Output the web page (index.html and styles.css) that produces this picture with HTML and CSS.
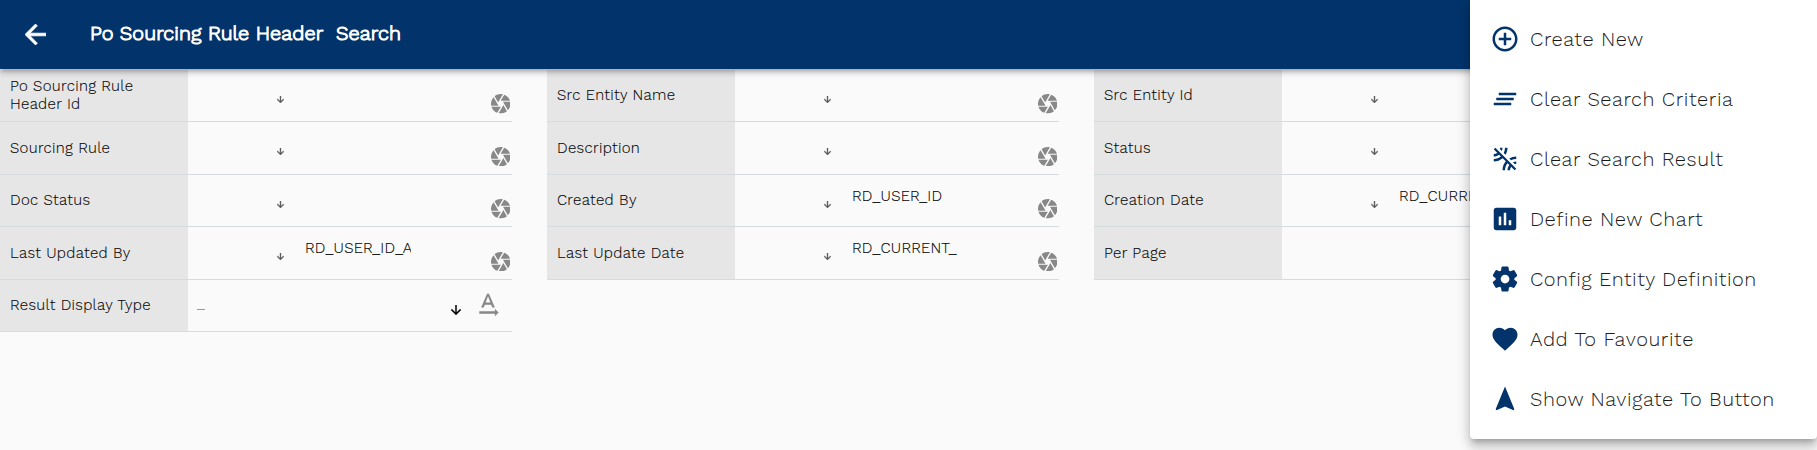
FILE: index.html
```html
<!DOCTYPE html>
<html lang="en">
<head>
<meta charset="utf-8">
<title>Po Sourcing Rule Header Search</title>
<link rel="stylesheet" href="styles.css">
</head>
<body>
<svg class="defs" aria-hidden="true">
  <symbol id="down" viewBox="4 4 16 16"><path d="M20 12l-1.41-1.41L13 16.17V4h-2v12.17l-5.58-5.59L4 12l8 8 8-8z"/></symbol>
  <symbol id="lens" viewBox="2 2 20 20"><path d="M9.4 10.5l4.77-8.26C13.47 2.09 12.75 2 12 2c-2.4 0-4.6.85-6.32 2.25l3.66 6.35.06-.1zM21.54 9c-.92-2.92-3.15-5.26-6-6.34L11.88 9h9.66zm.26 1h-7.49l.29.5 4.76 8.25C21 16.97 22 14.61 22 12c0-.69-.07-1.35-.2-2zM8.54 12l-3.9-6.75C3.01 7.03 2 9.39 2 12c0 .69.07 1.35.2 2h7.49l-1.15-2zm-6.08 3c.92 2.92 3.15 5.26 6 6.34L12.12 15H2.46zm11.27 0l-3.9 6.76c.7.15 1.42.24 2.17.24 2.4 0 4.6-.85 6.32-2.25l-3.66-6.35-.93 1.6z"/></symbol>
</svg>
<header class="bar">
  <svg class="back" viewBox="4 4 16 16"><path d="M20 11H7.83l5.59-5.59L12 4l-8 8 8 8 1.41-1.41L7.83 13H20v-2z"/></svg>
  <h1 class="title"><span>Po Sourcing Rule Header</span><span>Search</span></h1>
</header>
<main class="form">
  <section class="col">
    <div class="row"><div class="label wrap">Po Sourcing Rule Header Id</div><div class="field"><svg class="op"><use href="#down"/></svg><div class="value"></div><svg class="lens"><use href="#lens"/></svg></div></div>
    <div class="row"><div class="label">Sourcing Rule</div><div class="field"><svg class="op"><use href="#down"/></svg><div class="value"></div><svg class="lens"><use href="#lens"/></svg></div></div>
    <div class="row"><div class="label">Doc Status</div><div class="field"><svg class="op"><use href="#down"/></svg><div class="value"></div><svg class="lens"><use href="#lens"/></svg></div></div>
    <div class="row"><div class="label">Last Updated By</div><div class="field"><svg class="op"><use href="#down"/></svg><div class="value">RD_USER_ID_A</div><svg class="lens"><use href="#lens"/></svg></div></div>
    <div class="row"><div class="label">Result Display Type</div><div class="field select"><span class="dash"></span><svg class="pick"><use href="#down"/></svg><svg class="rotate" viewBox="0 0 24 24"><path d="M12.75 3h-1.5L6.5 14h2.1l.9-2.2h5l.9 2.2h2.1L12.75 3zm-2.62 7L12 4.98 13.87 10h-3.74zm10.37 8l-3-3v2H5v2h12.5v2l3-3z"/></svg></div></div>
  </section>
  <section class="col">
    <div class="row"><div class="label">Src Entity Name</div><div class="field"><svg class="op"><use href="#down"/></svg><div class="value"></div><svg class="lens"><use href="#lens"/></svg></div></div>
    <div class="row"><div class="label">Description</div><div class="field"><svg class="op"><use href="#down"/></svg><div class="value"></div><svg class="lens"><use href="#lens"/></svg></div></div>
    <div class="row"><div class="label">Created By</div><div class="field"><svg class="op"><use href="#down"/></svg><div class="value">RD_USER_ID</div><svg class="lens"><use href="#lens"/></svg></div></div>
    <div class="row"><div class="label">Last Update Date</div><div class="field"><svg class="op"><use href="#down"/></svg><div class="value">RD_CURRENT_</div><svg class="lens"><use href="#lens"/></svg></div></div>
  </section>
  <section class="col">
    <div class="row"><div class="label">Src Entity Id</div><div class="field"><svg class="op"><use href="#down"/></svg></div></div>
    <div class="row"><div class="label">Status</div><div class="field"><svg class="op"><use href="#down"/></svg></div></div>
    <div class="row"><div class="label">Creation Date</div><div class="field"><svg class="op"><use href="#down"/></svg><div class="value">RD_CURRENT_</div></div></div>
    <div class="row"><div class="label">Per Page</div><div class="field"></div></div>
  </section>
</main>
<nav class="menu">
  <a class="item"><svg viewBox="0 0 24 24"><path d="M13 7h-2v4H7v2h4v4h2v-4h4v-2h-4V7zm-1-5C6.48 2 2 6.48 2 12s4.48 10 10 10 10-4.48 10-10S17.52 2 12 2zm0 18c-4.41 0-8-3.59-8-8s3.59-8 8-8 8 3.59 8 8-3.59 8-8 8z"/></svg><span>Create New</span></a>
  <a class="item"><svg viewBox="0 0 24 24"><path d="M5 13h14v-2H5v2zm-2 4h14v-2H3v2zM7 7v2h14V7H7z"/></svg><span>Clear Search Criteria</span></a>
  <a class="item"><svg viewBox="0 0 24 24"><path d="M10 3H8c0 .37-.04.72-.12 1.06l1.59 1.59C9.81 4.84 10 3.94 10 3zM3 4.27l2.84 2.84C5.03 7.67 4.06 8 3 8v2c1.61 0 3.09-.55 4.27-1.46L8.7 9.97C7.14 11.24 5.16 12 3 12v2c2.71 0 5.19-.99 7.11-2.62l2.5 2.5C10.99 15.81 10 18.29 10 21h2c0-2.16.76-4.14 2.03-5.69l1.43 1.43C14.55 17.91 14 19.39 14 21h2c0-1.06.33-2.03.89-2.84L19.73 21 21 19.73 4.27 3 3 4.27zM14 3h-2c0 1.5-.37 2.91-1.02 4.16l1.46 1.46C13.42 6.98 14 5.06 14 3zm5.94 13.12c.34-.08.69-.12 1.06-.12v-2c-.94 0-1.84.19-2.66.52l1.6 1.6zm-4.56-4.56l1.46 1.46C18.09 12.37 19.5 12 21 12v-2c-2.06 0-3.98.58-5.62 1.56z"/></svg><span>Clear Search Result</span></a>
  <a class="item"><svg viewBox="0 0 24 24"><path d="M19 3H5c-1.1 0-2 .9-2 2v14c0 1.1.9 2 2 2h14c1.1 0 2-.9 2-2V5c0-1.1-.9-2-2-2zM9 17H7v-7h2v7zm4 0h-2V7h2v10zm4 0h-2v-4h2v4z"/></svg><span>Define New Chart</span></a>
  <a class="item"><svg viewBox="0 0 24 24"><path d="M19.5 12c0-.23-.01-.45-.03-.68l1.86-1.41c.4-.3.51-.86.26-1.3l-1.87-3.23c-.25-.44-.79-.62-1.25-.42l-2.15.91c-.37-.26-.76-.49-1.17-.68l-.29-2.31C14.8 2.38 14.37 2 13.87 2h-3.73c-.51 0-.94.38-1 .88l-.29 2.31c-.41.19-.8.42-1.17.68l-2.15-.91c-.46-.2-1-.02-1.25.42L2.41 8.62c-.25.44-.14.99.26 1.3l1.86 1.41c-.02.22-.03.44-.03.67s.01.45.03.68l-1.86 1.41c-.4.3-.51.86-.26 1.3l1.87 3.23c.25.44.79.62 1.25.42l2.15-.91c.37.26.76.49 1.17.68l.29 2.31c.06.5.49.88.99.88h3.73c.5 0 .93-.38.99-.88l.29-2.31c.41-.19.8-.42 1.17-.68l2.15.91c.46.2 1 .02 1.25-.42l1.87-3.23c.25-.44.14-.99-.26-1.3l-1.86-1.41c.03-.23.04-.45.04-.68zM12.04 15.5c-1.93 0-3.5-1.57-3.5-3.5s1.57-3.5 3.5-3.5 3.5 1.57 3.5 3.5-1.57 3.5-3.5 3.5z"/></svg><span>Config Entity Definition</span></a>
  <a class="item"><svg viewBox="0 0 24 24"><path d="M12 21.35l-1.45-1.32C5.4 15.36 2 12.28 2 8.5 2 5.42 4.42 3 7.5 3c1.74 0 3.41.81 4.5 2.09C13.09 3.81 14.76 3 16.5 3 19.58 3 22 5.42 22 8.5c0 3.78-3.4 6.86-8.55 11.54L12 21.35z"/></svg><span>Add To Favourite</span></a>
  <a class="item"><svg viewBox="0 0 24 24"><path d="M12 2L4.5 20.29l.71.71L12 18l6.79 3 .71-.71z"/></svg><span>Show Navigate To Button</span></a>
</nav>
</body>
</html>
```
FILE: styles.css
```css
* { box-sizing: border-box; }
body {
  margin: 0;
  height: 450px;
  overflow: hidden;
  background: #fafafa;
  color: #000;
  font-family: "Work Sans", Inter, "Liberation Sans", sans-serif;
  font-weight: 300;
  -webkit-text-stroke: .1px;
}
.defs { display: none; }

.bar {
  position: relative;
  z-index: 1;
  display: flex;
  align-items: center;
  height: 69px;
  padding-left: 25px;
  background: #02346b;
  color: #fff;
  box-shadow: 0 2px 4px -1px rgba(0,0,0,.2), 0 4px 5px rgba(0,0,0,.14), 0 1px 10px rgba(0,0,0,.12);
}
.back { width: 21px; height: 21px; margin-top: -1px; fill: #fff; stroke: #fff; stroke-width: .6; }
.title {
  display: flex;
  gap: 12.5px;
  margin: -3px 0 0 44px;
  font-size: 20px;
  font-weight: 300;
  line-height: 24px;
  letter-spacing: .12px;
  white-space: pre;
  -webkit-text-stroke: 1.1px #fff;
}

.form { display: flex; gap: 35px; padding-top: .5px; }
.col { flex: none; width: 512px; }
.row { display: flex; height: 52.5px; border-bottom: 1px solid #d5dcde; }
.label {
  display: flex;
  align-items: center;
  width: 187.5px;
  padding: 0 10px;
  background: #e6e6e6;
  font-size: 15px;
  line-height: 18px;
  letter-spacing: .33px;
}
.wrap { padding: 0 40px 1px 10px; }
.field { display: flex; flex: 1; padding-left: 89px; }
.op { width: 7px; height: 7px; margin-top: 26.3px; fill: #555; stroke: #555; stroke-width: 1; }
.value {
  width: 106px;
  margin: 11px 0 0 21.5px;
  overflow: hidden;
  font-size: 15px;
  letter-spacing: .22px;
  line-height: 20px;
  white-space: nowrap;
}
.lens { width: 19.5px; height: 19.5px; margin: 24.7px 0 0 79.8px; fill: #888; }
.select { padding-left: 9px; }
.dash { width: 8px; height: 1px; margin-top: 29px; background: #999; }
.pick { width: 10px; height: 10px; margin: 25px 0 0 246px; stroke: #000; stroke-width: .5; }
.rotate { width: 30px; height: 30px; margin: 10.7px 0 0 12px; fill: #888; }

/* Action menu floats over the header and the form */
.menu {
  position: absolute;
  z-index: 2;
  top: 0;
  right: 0;
  width: 347px;
  height: 439px;
  padding-top: 9px;
  border-radius: 0 0 4px 4px;
  background: #fff;
  box-shadow: 0 5px 5px -3px rgba(0,0,0,.2), 0 8px 10px 1px rgba(0,0,0,.14), 0 3px 14px 2px rgba(0,0,0,.12);
}
.item {
  display: flex;
  align-items: center;
  gap: 10px;
  height: 60px;
  padding-left: 20px;
  color: rgba(0,0,0,.87);
  font-size: 20px;
  letter-spacing: .55px;
  white-space: nowrap;
}
.item svg { width: 30px; height: 30px; fill: #02346b; }
.item span { margin-top: -1px; }
```
